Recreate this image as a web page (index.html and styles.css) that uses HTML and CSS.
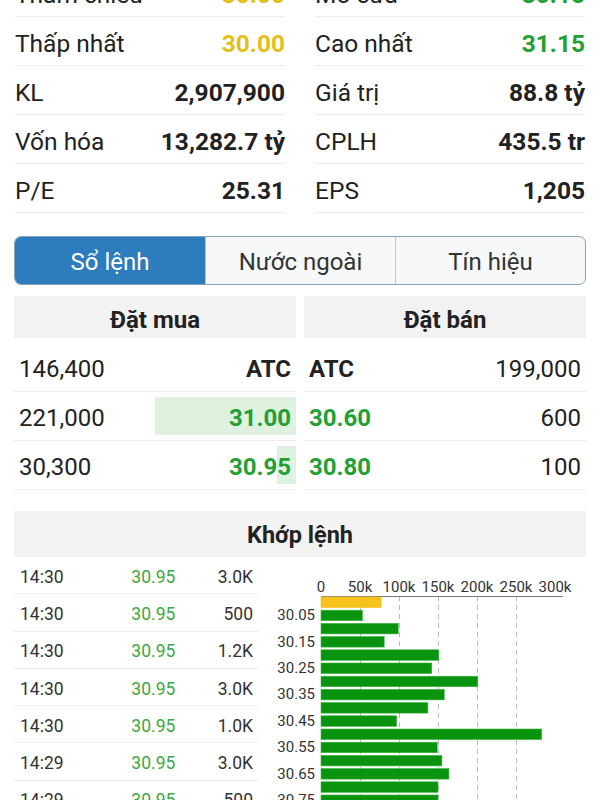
FILE: index.html
```html
<!DOCTYPE html>
<html lang="vi">
  <head>
    <meta charset="UTF-8" />
    <meta name="viewport" content="width=device-width, initial-scale=1.0" />
    <title>Chi tiết cổ phiếu</title>
    <link rel="stylesheet" href="styles.css">
  </head>
  <body>
    <div class="page">
      <!-- Thông tin giá -->
      <div class="stats">
        <div class="stat-col">
          <div class="stat-row"><span class="stat-label">Tham chiếu</span><span class="stat-value ref">30.00</span></div>
          <div class="stat-row"><span class="stat-label">Thấp nhất</span><span class="stat-value ref">30.00</span></div>
          <div class="stat-row"><span class="stat-label">KL</span><span class="stat-value">2,907,900</span></div>
          <div class="stat-row"><span class="stat-label">Vốn hóa</span><span class="stat-value">13,282.7 tỷ</span></div>
          <div class="stat-row"><span class="stat-label">P/E</span><span class="stat-value">25.31</span></div>
        </div>
        <div class="stat-col">
          <div class="stat-row"><span class="stat-label">Mở cửa</span><span class="stat-value up">30.15</span></div>
          <div class="stat-row"><span class="stat-label">Cao nhất</span><span class="stat-value up">31.15</span></div>
          <div class="stat-row"><span class="stat-label">Giá trị</span><span class="stat-value">88.8 tỷ</span></div>
          <div class="stat-row"><span class="stat-label">CPLH</span><span class="stat-value">435.5 tr</span></div>
          <div class="stat-row"><span class="stat-label">EPS</span><span class="stat-value">1,205</span></div>
        </div>
      </div>

      <!-- Tabs -->
      <div class="tabs">
        <div class="tab active">Sổ lệnh</div>
        <div class="tab">Nước ngoài</div>
        <div class="tab">Tín hiệu</div>
      </div>

      <!-- Sổ lệnh -->
      <div class="orderbook">
        <div class="ob-side">
          <div class="ob-head">Đặt mua</div>
          <div class="ob-row"><span>146,400</span><span class="ob-price">ATC</span></div>
          <div class="ob-row">
            <div class="ob-bar" style="width: 50%"></div>
            <span>221,000</span><span class="ob-price up">31.00</span>
          </div>
          <div class="ob-row">
            <div class="ob-bar" style="width: 6.9%"></div>
            <span>30,300</span><span class="ob-price up">30.95</span>
          </div>
        </div>
        <div class="ob-side sell">
          <div class="ob-head">Đặt bán</div>
          <div class="ob-row"><span class="ob-price">ATC</span><span>199,000</span></div>
          <div class="ob-row"><span class="ob-price up">30.60</span><span>600</span></div>
          <div class="ob-row"><span class="ob-price up">30.80</span><span>100</span></div>
        </div>
      </div>

      <!-- Khớp lệnh -->
      <div class="matched">
        <div class="matched-head">Khớp lệnh</div>
        <div class="matched-body">
          <div class="trades">
            <div class="trade"><span>14:30</span><span class="tr-price">30.95</span><span class="tr-vol">3.0K</span></div>
            <div class="trade"><span>14:30</span><span class="tr-price">30.95</span><span class="tr-vol">500</span></div>
            <div class="trade"><span>14:30</span><span class="tr-price">30.95</span><span class="tr-vol">1.2K</span></div>
            <div class="trade"><span>14:30</span><span class="tr-price">30.95</span><span class="tr-vol">3.0K</span></div>
            <div class="trade"><span>14:30</span><span class="tr-price">30.95</span><span class="tr-vol">1.0K</span></div>
            <div class="trade"><span>14:29</span><span class="tr-price">30.95</span><span class="tr-vol">3.0K</span></div>
            <div class="trade"><span>14:29</span><span class="tr-price">30.95</span><span class="tr-vol">500</span></div>
          </div>
          <div class="chart">
            <svg id="volchart" width="316" height="260"></svg>
          </div>
        </div>
      </div>
    </div>

    <script>
      // Khối lượng theo giá (nghìn cp)
      const levels = [77, 53, 99, 81, 151, 142, 201, 158, 137, 97, 283, 149, 155, 164, 150, 150];
      const ns = "http://www.w3.org/2000/svg";
      const svg = document.getElementById("volchart");
      const x0 = 51;
      const top0 = 40;
      const scale = 0.78; // px per 1k

      function el(name, attrs, text) {
        const node = document.createElementNS(ns, name);
        for (const k in attrs) node.setAttribute(k, attrs[k]);
        if (text) node.textContent = text;
        svg.appendChild(node);
        return node;
      }

      // Grid lines
      for (let i = 1; i <= 5; i++) {
        const x = x0 + i * 39 + 0.5;
        el("line", { x1: x, y1: top0 - 1, x2: x, y2: 260, class: "grid" });
      }

      // Axis labels
      const ticks = ["0", "50k", "100k", "150k", "200k", "250k", "300k"];
      ticks.forEach((t, i) => {
        el("text", { x: x0 + i * 39, y: top0 - 5, class: "tick", "text-anchor": "middle" }, t);
      });
      el("line", { x1: x0, y1: top0 - 0.5, x2: 293, y2: top0 - 0.5, class: "axis" });

      // Bars
      levels.forEach((v, i) => {
        const y = top0 + i * 13.2;
        el("rect", {
          x: x0,
          y: y,
          width: v * scale,
          height: 10.5,
          class: i === 0 ? "bar ref" : "bar",
        });
        if (i % 2 === 1) {
          const price = (30 + i * 0.05).toFixed(2);
          el("text", { x: 45, y: y + 10, class: "tick", "text-anchor": "end" }, price);
        }
      });
    </script>
  </body>
</html>
```

FILE: styles.css
```css
/* Base */
body {
  margin: 0;
  background: #fff;
  color: #222;
  font-family: Roboto, "Noto Sans", Arial, sans-serif;
  overflow: hidden;
}

.page {
  padding: 0 14px;
}

.up {
  color: #22a033;
}

.ref {
  color: #e2bf1c;
}

/* Price stats */
.stats {
  display: grid;
  grid-template-columns: 1fr 1fr;
  column-gap: 30px;
  margin: -32px 1px 0;
}

.stat-row {
  display: flex;
  justify-content: space-between;
  align-items: center;
  box-sizing: border-box;
  height: 49px;
  padding-top: 4px;
  border-bottom: 1px solid #ececec;
  font-size: 24.5px;
}

.stat-value {
  font-weight: bold;
}

/* Tabs */
.tabs {
  display: grid;
  grid-template-columns: 1fr 1fr 1fr;
  margin-top: 23px;
  border: 1px solid #8aa3b7;
  border-radius: 7px;
  overflow: hidden;
  background: #f6f8fa;
}

.tab {
  height: 47px;
  line-height: 51px;
  text-align: center;
  font-size: 24px;
  color: #333;
  border-left: 1px solid #b7c6d2;
}

.tab:first-child {
  border-left: none;
}

.tab.active {
  background: #2d7cbd;
  color: #fff;
}

/* Order book */
.orderbook {
  display: grid;
  grid-template-columns: 1fr 1fr;
  column-gap: 8px;
  margin-top: 11px;
}

.ob-head {
  height: 42px;
  line-height: 48px;
  margin-bottom: 5px;
  text-align: center;
  font-size: 24px;
  font-weight: bold;
  background: #f2f2f2;
}

.ob-row {
  position: relative;
  display: flex;
  justify-content: space-between;
  align-items: center;
  box-sizing: border-box;
  height: 49px;
  padding: 3px 5px 0;
  border-bottom: 1px solid #ececec;
  font-size: 24px;
}

.ob-row span {
  position: relative;
}

.ob-price {
  font-weight: bold;
}

.ob-bar {
  position: absolute;
  right: 0;
  top: 5px;
  bottom: 5px;
  background: #dff2e0;
}

/* Matched orders */
.matched {
  margin-top: 21px;
}

.matched-head {
  height: 46px;
  line-height: 48px;
  text-align: center;
  font-size: 23.5px;
  font-weight: bold;
  background: #f3f3f3;
}

.matched-body {
  display: flex;
  gap: 12px;
}

.trades {
  width: 244px;
  flex: none;
}

.trade {
  display: grid;
  grid-template-columns: 1fr 1fr 1fr;
  align-items: center;
  box-sizing: border-box;
  height: 37.3px;
  padding: 3px 5px 0 6px;
  border-bottom: 1px solid #ececec;
  font-size: 17.5px;
  color: #333;
}

.tr-price {
  text-align: right;
  color: #3fa744;
}

.tr-vol {
  text-align: right;
}

/* Volume chart */
.chart svg {
  display: block;
  font-family: Roboto, Arial, sans-serif;
}

.chart .tick {
  font-size: 15px;
  fill: #333;
}

.chart .axis {
  stroke: #777;
  stroke-width: 1;
}

.chart .grid {
  stroke: #bdbdbd;
  stroke-width: 1;
  stroke-dasharray: 5 4;
}

.chart .bar {
  fill: #0a930e;
  stroke: #39b53c;
  stroke-width: 0.6;
}

.chart .bar.ref {
  fill: #f6c21b;
  stroke: #f6c21b;
}
```
